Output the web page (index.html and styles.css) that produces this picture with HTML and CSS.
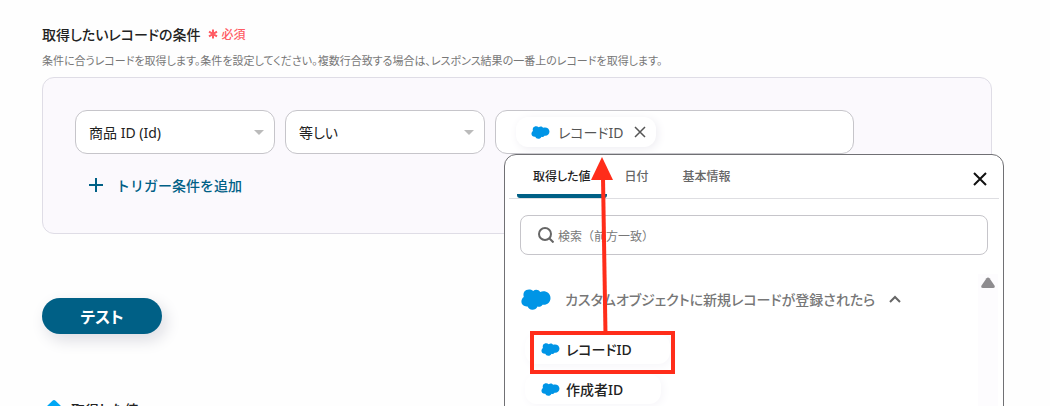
FILE: index.html
```html
<!DOCTYPE html>
<html lang="ja">
  <head>
    <meta charset="utf-8">
    <title>取得したいレコードの条件</title>
    <link rel="stylesheet" href="styles.css">
  </head>
  <body>
    <svg class="symbols" aria-hidden="true">
      <symbol id="cloud" viewBox="0 0 30 21">
        <path fill="#0095e6" d="M3.4 2.6C5 .4 9-.7 12.2 2c2-1.8 5.400-1.500 7 .9 4.600-2 10.300.7 10.300 6.100 0 4.500-3.700 7.400-8 6.700-1.200 1.900-3.200 2.500-5 1.700-1 2.300-3 3.400-5.200 3.300-2.400-.1-3.900-1.300-4.700-3.300C3 17.800.4 15.500.4 12.500c0-1.900.9-3.500 2.400-4.500C2.200 6.200 2.300 4.200 3.400 2.600z"/>
      </symbol>
    </svg>

    <main class="page">
      <div class="heading">
        <h1 class="title">取得したいレコードの条件</h1>
        <span class="required">
          <svg class="asterisk" viewBox="0 0 10 10"><path d="M5 .5v9M1 2.700l8 4.600M9 2.700L1 7.300"/></svg>
          必須
        </span>
      </div>
      <p class="description">条件に合うレコードを取得します。条件を設定してください。複数行合致する場合は、レスポンス結果の一番上のレコードを取得します。</p>

      <section class="panel">
        <div class="condition">
          <div class="select-box">
            <select class="select" aria-label="項目">
              <option>商品 ID (Id)</option>
            </select>
            <svg class="caret" viewBox="0 0 10 5"><path d="M0 0h10L5 5z"/></svg>
          </div>
          <div class="select-box">
            <select class="select" aria-label="演算子">
              <option>等しい</option>
            </select>
            <svg class="caret" viewBox="0 0 10 5"><path d="M0 0h10L5 5z"/></svg>
          </div>
          <div class="value-box">
            <span class="chip">
              <svg class="cloud"><use href="#cloud"/></svg>
              レコードID
              <button class="icon-button" type="button" aria-label="削除">
                <svg class="remove" viewBox="0 0 12 12"><path d="M1 1l10 10M11 1L1 11"/></svg>
              </button>
            </span>

            <div class="popover">
              <div class="tabs">
                <button class="tab tab-active" type="button">取得した値</button>
                <button class="tab" type="button">日付</button>
                <button class="tab" type="button">基本情報</button>
                <button class="icon-button close-button" type="button" aria-label="閉じる">
                  <svg class="close" viewBox="0 0 14 14"><path d="M1 1l12 12M13 1L1 13"/></svg>
                </button>
              </div>
              <label class="search">
                <svg class="magnifier" viewBox="0 0 16 16"><circle cx="7" cy="7" r="6"/><path d="M11.500 11.500L15.500 15.500"/></svg>
                <input class="search-input" type="text" placeholder="検索（前方一致）" aria-label="検索">
              </label>
              <div class="results">
                <div class="result-list">
                  <button class="group" type="button">
                    <svg class="cloud-large"><use href="#cloud"/></svg>
                    カスタムオブジェクトに新規レコードが登録されたら
                    <svg class="chevron" viewBox="0 0 12 8"><path d="M1 7l5-5 5 5"/></svg>
                  </button>
                  <button class="item" type="button"><svg class="cloud"><use href="#cloud"/></svg>レコードID</button>
                  <button class="item" type="button"><svg class="cloud"><use href="#cloud"/></svg>作成者ID</button>
                </div>
                <div class="scroll-track">
                  <svg class="scroll-up" viewBox="0 0 14 11"><path d="M5.500 1.200Q7-.4 8.500 1.200L13.500 8.500Q14.500 11 12 11H2Q-.5 11 .5 8.500z"/></svg>
                </div>
              </div>
              <svg class="annotation" viewBox="0 0 180 224" aria-hidden="true">
                <path class="arrow-line" d="M100.500 180L98 22"/>
                <path class="arrow-head" d="M97 2L108 25H86z"/>
                <rect class="frame" x="27" y="178" width="141" height="39"/>
              </svg>
            </div>
          </div>
        </div>
        <button class="add-button" type="button">
          <svg class="plus" viewBox="0 0 14 14"><path d="M7 0v14M0 7h14"/></svg>
          トリガー条件を追加
        </button>
      </section>

      <button class="test-button" type="button">テスト</button>

      <h2 class="subtitle">
        <svg class="diamond" viewBox="0 0 18 18"><path d="M7.500.7Q9-.5 10.500.7l7 6.800Q18.500 9 17.500 10.500l-7 7Q9 18.500 7.500 17.500l-7-7Q-.5 9 .5 7.500z"/></svg>
        取得した値
      </h2>
    </main>
  </body>
</html>
```
FILE: styles.css
```css
* {
  box-sizing: border-box;
}
body {
  margin: 0;
  overflow: hidden;
  background-color: #fefefe;
  color: #222;
  font-family: "Noto Sans", "Noto Sans CJK JP", sans-serif;
  font-size: 14px;
  font-feature-settings: "palt";
}
button {
  padding: 0;
  border: 0;
  background: none;
  color: inherit;
  font: inherit;
  font-feature-settings: inherit;
  cursor: pointer;
}
svg {
  flex: none;
  fill: none;
}
.symbols {
  position: absolute;
  width: 0;
  height: 0;
}
.page {
  padding: 23px 58px 0 42px;
}
.heading {
  display: flex;
  align-items: center;
  gap: 8px;
  height: 22px;
}
.title {
  margin: 0;
  font-size: 14px;
  font-weight: 500;
}
.required {
  display: flex;
  align-items: center;
  gap: 3px;
  color: #ff5c64;
  font-size: 12px;
  font-weight: 500;
}
.asterisk {
  width: 10px;
  height: 10px;
  stroke: #ff5c64;
  stroke-width: 2;
}
.description {
  margin: 5px 0;
  color: #777;
  font-size: 11px;
  line-height: 22px;
}
.panel {
  padding: 32px 32px 36px;
  border: 1px solid #dfdde6;
  border-radius: 12px;
  background-color: #fbf9fd;
}
.condition {
  display: grid;
  grid-template-columns: 200px 200px 1fr;
  gap: 10px;
  padding-right: 105px;
}
.select-box {
  display: flex;
  align-items: center;
  position: relative;
}
.select {
  appearance: none;
  width: 100%;
  height: 44px;
  padding: 0 32px 0 13px;
  border: 1px solid #c6c5ca;
  border-radius: 12px;
  background-color: #fff;
  color: #222;
  font: inherit;
  font-feature-settings: inherit;
}
.caret {
  position: absolute;
  right: 11px;
  width: 10px;
  height: 5px;
  fill: #bbb;
  pointer-events: none;
}
.value-box {
  display: flex;
  align-items: center;
  position: relative;
  height: 44px;
  padding-left: 20px;
  border: 1px solid #c6c5ca;
  border-radius: 12px;
  background-color: #fff;
}
.chip {
  display: flex;
  align-items: center;
  gap: 8px;
  height: 30px;
  padding: 0 10px 0 15px;
  border-radius: 12px;
  background-color: #fff;
  box-shadow: 2px 2px 10px #eeedf2;
  color: #555;
}
.cloud {
  width: 19px;
  height: 13px;
}
.icon-button {
  display: flex;
}
.remove {
  width: 12px;
  height: 12px;
  margin-left: 3px;
  stroke: #555;
  stroke-width: 1.5;
}
.popover {
  position: absolute;
  top: 43px;
  left: 8px;
  z-index: 1;
  width: 500px;
  height: 320px;
  border: 1px solid #707074;
  border-radius: 12px;
  background-color: #fff;
}
.tabs {
  display: flex;
  gap: 2px;
  margin: 0 4px;
  padding: 0 12px 0 8px;
  border-bottom: 1px solid #dedee2;
}
.tab {
  height: 43px;
  padding: 3px 16px 0;
  border-bottom: 4px solid transparent;
  color: #666;
  font-size: 12px;
  font-weight: 500;
}
.tab-active {
  border-bottom-color: #006086;
  border-radius: 3px;
  color: #222;
}
.close-button {
  align-items: center;
  margin-left: auto;
  padding-top: 5px;
}
.close {
  width: 14px;
  height: 14px;
  stroke: #111;
  stroke-width: 2;
}
.search {
  display: flex;
  align-items: center;
  gap: 4px;
  height: 40px;
  margin: 16px 15px 0;
  padding: 0 17px;
  border: 1px solid #c6c5ca;
  border-radius: 8px;
}
.magnifier {
  width: 16px;
  height: 16px;
  stroke: #666;
  stroke-width: 2;
}
.search-input {
  flex: 1;
  min-width: 0;
  padding: 2px 0 0;
  border: 0;
  outline: 0;
  background: none;
  font-family: inherit;
  font-size: 12px;
}
.search-input::placeholder {
  color: #777;
}
.results {
  display: flex;
  justify-content: space-between;
  margin-top: 19px;
  padding: 0 5px 0 16px;
}
.result-list {
  display: flex;
  flex-direction: column;
  align-items: flex-start;
  padding-top: 10px;
}
.group {
  display: flex;
  align-items: center;
  gap: 14px;
  height: 30px;
  margin-bottom: 20px;
  color: #777;
  font-weight: 500;
}
.cloud-large {
  width: 30px;
  height: 21px;
}
.chevron {
  width: 12px;
  height: 8px;
  stroke: #666;
  stroke-width: 2;
}
.item {
  display: flex;
  align-items: center;
  gap: 6px;
  height: 30px;
  margin: 0 0 10px 4px;
  padding: 0 38px 0 16px;
  border-radius: 12px;
  box-shadow: 2px 2px 10px #f6f5f9;
  font-weight: 500;
}
.scroll-track {
  display: flex;
  justify-content: center;
  width: 20px;
  padding-top: 3px;
  background-color: #fdfcfe;
}
.scroll-up {
  width: 14px;
  height: 11px;
  fill: #8e8c8f;
}
.annotation {
  position: absolute;
  top: 0;
  left: 0;
  width: 180px;
  height: 224px;
  pointer-events: none;
}
.arrow-line,
.frame {
  stroke: #ff2d1a;
  stroke-width: 4;
}
.arrow-head {
  fill: #ff2d1a;
}
.add-button {
  display: flex;
  align-items: center;
  gap: 13px;
  height: 24px;
  margin-top: 19px;
  padding-left: 14px;
  color: #006086;
  font-weight: 500;
  font-feature-settings: normal;
}
.plus {
  width: 14px;
  height: 14px;
  stroke: #006086;
  stroke-width: 2;
}
.test-button {
  display: block;
  width: 120px;
  height: 36px;
  margin-top: 64px;
  border-radius: 18px;
  background-color: #006086;
  box-shadow: 4px 6px 16px #dcdce2;
  color: #fff;
  font-size: 16px;
  font-weight: 700;
}
.subtitle {
  display: flex;
  align-items: center;
  gap: 8px;
  height: 24px;
  margin: 63px 0 0;
  padding-left: 3px;
  font-size: 14px;
  font-weight: 500;
}
.diamond {
  width: 18px;
  height: 18px;
  fill: #00a7f5;
}
```
